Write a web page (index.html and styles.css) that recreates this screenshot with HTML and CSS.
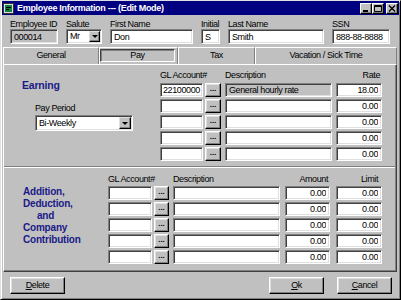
FILE: index.html
```html
<!DOCTYPE html>
<html lang="en">

<head>
    <meta charset="UTF-8">
    <meta name="viewport" content="width=device-width, initial-scale=1.0">
    <title>Employee Information</title>

    <link rel="stylesheet" href="styles.css">
</head>

<body>

    <div class="window">

        <div class="titlebar">
            <svg class="app-icon" width="11" height="11" viewBox="0 0 11 11">
                <rect x="0.5" y="0.5" width="10" height="10" fill="#e0e0e0" stroke="#303030" />
                <rect x="2" y="2" width="7" height="7" fill="#108040" />
                <path d="M3 4.5h5M3 6.5h3" stroke="#000" />
            </svg>
            <span class="title">Employee Information --- (Edit Mode)</span>
            <div class="title-buttons">
                <div class="tbtn">
                    <svg width="8" height="7" viewBox="0 0 8 7"><rect x="1" y="5" width="5" height="2" fill="#000" /></svg>
                </div>
                <div class="tbtn">
                    <svg width="8" height="7" viewBox="0 0 8 7"><path d="M0.5 0.5h7v6h-7z M0.5 1.5h7" fill="none" stroke="#000" /></svg>
                </div>
                <div class="tbtn close">
                    <svg width="8" height="7" viewBox="0 0 8 7"><path d="M1 0.5l6 6M7 0.5l-6 6" stroke="#000" stroke-width="1.4" /></svg>
                </div>
            </div>
        </div>

        <div class="header">
            <div class="hfield w-id">
                <label>Employee ID</label>
                <input class="field readonly hf" value="000014" readonly>
            </div>
            <div class="hfield w-salute">
                <label>Salute</label>
                <div class="combo hf">
                    <span class="combo-text">Mr</span>
                    <div class="combo-btn"><div class="arrow"></div></div>
                </div>
            </div>
            <div class="hfield w-first">
                <label>First Name</label>
                <input class="field hf" value="Don">
            </div>
            <div class="hfield w-initial">
                <label>Initial</label>
                <input class="field hf" value="S">
            </div>
            <div class="hfield w-last">
                <label>Last Name</label>
                <input class="field hf" value="Smith">
            </div>
            <div class="hfield w-ssn">
                <label>SSN</label>
                <input class="field hf" value="888-88-8888">
            </div>
        </div>

        <div class="tabs">
            <div class="tab tab-general">General</div>
            <div class="tab tab-pay"><span class="tab-pressed">Pay</span></div>
            <div class="tab tab-tax">Tax</div>
            <div class="tab tab-vacation">Vacation / Sick Time</div>
        </div>

        <div class="panel">

            <div class="earning">
                <div class="earning-left">
                    <h2 class="section-title">Earning</h2>
                    <div class="pay-period">
                        <label>Pay Period</label>
                        <div class="combo period">
                            <span class="combo-text">Bi-Weekly</span>
                            <div class="combo-btn"><div class="arrow"></div></div>
                        </div>
                    </div>
                </div>

                <div class="grid earning-grid">
                    <div class="row head">
                        <span class="e-gl">GL Account#</span>
                        <span class="e-dots"></span>
                        <span class="e-desc">Description</span>
                        <span class="e-rate right">Rate</span>
                    </div>
                    <div class="row">
                        <input class="field e-gl" value="22100000">
                        <div class="btn dots e-dots">...</div>
                        <input class="field readonly e-desc" value="General hourly rate" readonly>
                        <input class="field num e-rate" value="18.00">
                    </div>
                    <div class="row">
                        <input class="field e-gl" value="">
                        <div class="btn dots e-dots">...</div>
                        <input class="field e-desc" value="">
                        <input class="field num e-rate" value="0.00">
                    </div>
                    <div class="row">
                        <input class="field e-gl" value="">
                        <div class="btn dots e-dots">...</div>
                        <input class="field e-desc" value="">
                        <input class="field num e-rate" value="0.00">
                    </div>
                    <div class="row">
                        <input class="field e-gl" value="">
                        <div class="btn dots e-dots">...</div>
                        <input class="field e-desc" value="">
                        <input class="field num e-rate" value="0.00">
                    </div>
                    <div class="row">
                        <input class="field e-gl" value="">
                        <div class="btn dots e-dots">...</div>
                        <input class="field e-desc" value="">
                        <input class="field num e-rate" value="0.00">
                    </div>
                </div>
            </div>

            <div class="divider"></div>

            <div class="deductions">
                <div class="deductions-left">
                    <p class="section-title small">Addition,<br>Deduction,<br><span class="indent">and</span><br>Company<br>Contribution</p>
                </div>

                <div class="grid deductions-grid">
                    <div class="row head">
                        <span class="d-gl">GL Account#</span>
                        <span class="d-dots"></span>
                        <span class="d-desc">Description</span>
                        <span class="d-amount right">Amount</span>
                        <span class="d-limit right">Limit</span>
                    </div>
                    <div class="row">
                        <input class="field d-gl" value="">
                        <div class="btn dots d-dots">...</div>
                        <input class="field d-desc" value="">
                        <input class="field num d-amount" value="0.00">
                        <input class="field num d-limit" value="0.00">
                    </div>
                    <div class="row">
                        <input class="field d-gl" value="">
                        <div class="btn dots d-dots">...</div>
                        <input class="field d-desc" value="">
                        <input class="field num d-amount" value="0.00">
                        <input class="field num d-limit" value="0.00">
                    </div>
                    <div class="row">
                        <input class="field d-gl" value="">
                        <div class="btn dots d-dots">...</div>
                        <input class="field d-desc" value="">
                        <input class="field num d-amount" value="0.00">
                        <input class="field num d-limit" value="0.00">
                    </div>
                    <div class="row">
                        <input class="field d-gl" value="">
                        <div class="btn dots d-dots">...</div>
                        <input class="field d-desc" value="">
                        <input class="field num d-amount" value="0.00">
                        <input class="field num d-limit" value="0.00">
                    </div>
                    <div class="row">
                        <input class="field d-gl" value="">
                        <div class="btn dots d-dots">...</div>
                        <input class="field d-desc" value="">
                        <input class="field num d-amount" value="0.00">
                        <input class="field num d-limit" value="0.00">
                    </div>
                </div>
            </div>

        </div>

        <div class="footer">
            <div class="btn push"><u>D</u>elete</div>
            <div class="btn push ok"><u>O</u>k</div>
            <div class="btn push cancel"><u>C</u>ancel</div>
        </div>

    </div>

</body>

</html>
```

FILE: styles.css
```css
*,
*::before,
*::after {
    margin: 0;
    padding: 0;
    box-sizing: border-box;
}

body {
    background-color: #c0c0c0;
    font-family: "Liberation Sans", Arial, sans-serif;
    font-size: 9px;
    letter-spacing: -0.4px;
    color: #000;
}

.window {
    width: 401px;
    height: 300px;
    padding: 0 1px;
    border: 1px solid;
    border-color: #dfdfdf #000 #000 #dfdfdf;
    box-shadow: inset 1px 1px #fff, inset -1px -1px #808080;
    overflow: hidden;
}

/* title bar */

.titlebar {
    height: 14px;
    display: flex;
    align-items: center;
    background-color: #000080;
    color: #fff;
}

.app-icon {
    margin-left: 1px;
    margin-right: 3px;
}

.title {
    font-weight: bold;
    letter-spacing: -0.3px;
    white-space: nowrap;
}

.title-buttons {
    margin-left: auto;
    margin-right: 1px;
    display: flex;
}

.tbtn {
    width: 12px;
    height: 11px;
    display: flex;
    align-items: center;
    justify-content: center;
    background-color: #c0c0c0;
    border: 1px solid;
    border-color: #fff #000 #000 #fff;
    box-shadow: inset -1px -1px #808080;
}

.tbtn.close {
    margin-left: 2px;
}

/* header fields */

.header {
    display: flex;
    gap: 8px;
    padding: 4px 0 0 8px;
}

.hfield label {
    display: block;
    line-height: 10px;
    white-space: nowrap;
}

.w-id { width: 48px; }
.w-salute { width: 36px; }
.w-first { width: 83px; }
.w-initial { width: 19px; }
.w-last { width: 96px; }
.w-ssn { width: 58px; }

.field {
    display: block;
    height: 14px;
    padding: 0 3px;
    font: inherit;
    letter-spacing: inherit;
    color: #000;
    background-color: #fff;
    border: 1px solid;
    border-color: #808080 #fff #fff #808080;
    box-shadow: inset 1px 1px #404040, inset -1px -1px #dfdfdf;
    outline: none;
}

.hf {
    width: 100%;
    height: 15px;
}

.field.readonly {
    background-color: #c0c0c0;
}

.field.num {
    text-align: right;
}

.combo {
    display: flex;
    align-items: stretch;
    background-color: #fff;
    border: 1px solid;
    border-color: #808080 #fff #fff #808080;
    box-shadow: inset 1px 1px #404040, inset -1px -1px #dfdfdf;
    padding: 1px;
}

.combo-text {
    flex: 1;
    padding-left: 2px;
    line-height: 11px;
}

.combo-btn {
    width: 11px;
    display: flex;
    align-items: center;
    justify-content: center;
    background-color: #c0c0c0;
    border: 1px solid;
    border-color: #dfdfdf #000 #000 #dfdfdf;
    box-shadow: inset -1px -1px #808080;
}

.arrow {
    width: 0;
    height: 0;
    border-left: 3px solid transparent;
    border-right: 3px solid transparent;
    border-top: 3px solid #000;
}

/* tabs */

.tabs {
    display: flex;
    height: 17px;
    margin: 3px 2px 0 1px;
}

.tab {
    text-align: center;
    line-height: 15px;
    border-top: 1px solid #fff;
    border-left: 1px solid #fff;
    border-right: 1px solid #808080;
}

.tab-general { width: 96px; }
.tab-pay { width: 79px; }
.tab-tax { width: 77px; }
.tab-vacation { flex: 1; }

.tab-pay {
    padding: 1px 2px 1px 0;
}

.tab-pressed {
    display: block;
    height: 13px;
    line-height: 10px;
    border: 1px solid;
    border-color: #404040 #fff #fff #404040;
    box-shadow: inset 1px 1px #808080;
}

/* panel */

.panel {
    height: 208px;
    margin: 0 2px 0 1px;
    border: 1px solid;
    border-color: #fff #404040 #404040 #fff;
    box-shadow: inset -1px -1px #808080;
}

.section-title {
    font-size: 10.5px;
    font-weight: bold;
    letter-spacing: -0.2px;
    line-height: 12px;
    color: #1a1a88;
}

.section-title.small {
    font-size: 10px;
}

.indent {
    padding-left: 14px;
}

.earning {
    display: flex;
    height: 101px;
}

.earning-left {
    width: 156px;
    padding: 14px 0 0 18px;
}

.pay-period {
    margin-top: 12px;
    padding-left: 13px;
}

.pay-period label {
    display: block;
    line-height: 10px;
    margin-bottom: 2px;
}

.combo.period {
    width: 98px;
    height: 16px;
}

.combo.period .combo-text {
    line-height: 12px;
}

.combo.period .combo-btn {
    width: 12px;
}

.grid {
    display: flex;
    flex-direction: column;
    gap: 2px;
}

.earning-grid {
    padding-top: 5px;
}

.deductions-grid {
    padding-top: 6px;
}

.row {
    display: flex;
    height: 14px;
}

.row.head {
    height: 10px;
    line-height: 10px;
    margin-bottom: 1px;
    white-space: nowrap;
}

.right {
    text-align: right;
}

.e-gl { width: 43px; }
.e-dots { width: 16px; margin-left: 2px; }
.e-desc { width: 107px; margin-left: 4px; }
.e-rate { width: 46px; margin-left: 4px; }
.head .e-rate { padding-right: 2px; }
.field.e-gl { padding: 0 0 0 2px; }

.divider {
    height: 2px;
    border-top: 1px solid #808080;
    border-bottom: 1px solid #fff;
    margin-right: 1px;
}

.deductions {
    display: flex;
}

.deductions-left {
    width: 104px;
    padding: 18px 0 0 19px;
}

.deductions-grid .row.head {
    margin-bottom: 0;
}

.d-gl { width: 44px; }
.d-dots { width: 15px; margin-left: 2px; }
.d-desc { width: 107px; margin-left: 4px; }
.d-amount { width: 45px; margin-left: 5px; }
.d-limit { width: 46px; margin-left: 6px; }
.head .d-amount { padding-right: 2px; }
.head .d-limit { padding-right: 4px; }

/* buttons */

.btn {
    background-color: #c0c0c0;
    border: 1px solid;
    border-color: #fff #000 #000 #fff;
    box-shadow: inset -1px -1px #808080, inset 1px 1px #dfdfdf;
    text-align: center;
}

.dots {
    font-size: 8px;
    font-weight: bold;
    letter-spacing: 0;
    line-height: 10px;
}

.footer {
    display: flex;
    margin-top: 5px;
    padding: 0 7px 0 8px;
}

.push {
    width: 55px;
    height: 17px;
    line-height: 14px;
}

.push.ok {
    margin-left: auto;
}

.push.cancel {
    margin-left: 13px;
}
```
